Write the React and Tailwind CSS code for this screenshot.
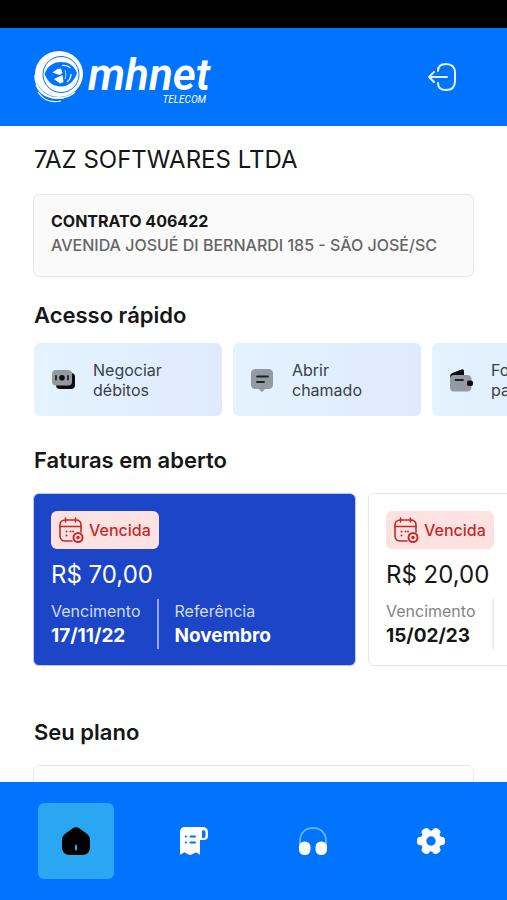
import React, { useState } from "react";

const quickLinks = [
  { id: "negociar", first: "Negociar", second: "débitos", Icon: MoneyIcon },
  { id: "chamado", first: "Abrir", second: "chamado", Icon: ChatIcon },
  { id: "pagamento", first: "Formas de", second: "pagamento", Icon: WalletIcon },
];

const invoices = [
  { id: 1, value: "R$ 70,00", dueDate: "17/11/22", reference: "Novembro", active: true },
  { id: 2, value: "R$ 20,00", dueDate: "15/02/23", reference: "Fevereiro", active: false },
];

const tabs = [
  { id: "home", label: "Início", Icon: HomeIcon },
  { id: "invoices", label: "Faturas", Icon: ReceiptIcon },
  { id: "support", label: "Suporte", Icon: HeadphonesIcon },
  { id: "settings", label: "Configurações", Icon: GearIcon },
];

function LogoMark() {
  return (
    <svg viewBox="0 0 50 54" className="h-[54px] w-[50px]" fill="none" aria-hidden="true">
      <path d="M1 25c0 12 8 22 22 23 8 0 14-2 18-6" stroke="#fff" strokeWidth="1.500" />
      <path d="M2 35c4 10 14 15 28 13" stroke="#fff" strokeWidth="1.200" />
      <path d="M4 42c5 8 13 11 23 9" stroke="#fff" strokeWidth="1.200" />
      <ellipse cx="25" cy="24" rx="24" ry="23" fill="#fff" />
      <circle cx="27" cy="24.500" r="18" stroke="#0073ff" strokeWidth="1" />
      <path d="M10.500 24C14 15 20 12 27 12s13 3 16 11c-3 9-9 13.500-16 13.500S14 33 10.500 24Z" fill="#0073ff" />
      <path d="m18.500 22.500 5-3.500 3.500-.500 1.500 4.500-3 2-7-2.500Z" fill="#fff" />
      <path d="m20 29 8.500-4 1 7-3.500 1.500L20 29Z" fill="#fff" />
      <path d="M28 15.500c4-.500 6.500.500 8.500 2.500M37 24c0 4-1.500 6-4 8" stroke="#fff" strokeWidth="1.200" />
      <path d="M31 20c1 3 1 6 0 9" stroke="#b9dbff" strokeWidth="1" />
    </svg>
  );
}

function LogoutIcon() {
  return (
    <svg
      viewBox="0 0 30 30"
      className="h-[30px] w-[30px]"
      fill="none"
      stroke="#e6f1ff"
      strokeWidth="2"
      strokeLinecap="round"
      strokeLinejoin="round"
      aria-hidden="true"
    >
      <path d="M11 9c0-4.500 2.500-7 8-7 6.500 0 9 3 9 9v8c0 6-2.500 9-9 9-5.500 0-8-2.500-8-7" />
      <path d="M20 15H2M7 10l-5 5 5 5" />
    </svg>
  );
}

function MoneyIcon() {
  return (
    <svg viewBox="0 0 26 22" className="h-[22px] w-[26px]" aria-hidden="true">
      <rect x="5" y="4" width="19" height="16" rx="4" fill="#0b0e11" />
      <rect x="1" y="1" width="20" height="15.500" rx="4" fill="#929ba1" />
      <circle cx="11" cy="8.800" r="2.800" fill="#0b0e11" />
      <path d="M5 6.800v4M17 6.800v4" stroke="#0b0e11" strokeWidth="1.500" strokeLinecap="round" />
    </svg>
  );
}

function ChatIcon() {
  return (
    <svg viewBox="0 0 24 24" className="h-6 w-6" aria-hidden="true">
      <path
        d="M6 1h12c3.500 0 5 1.800 5 5v10c0 3.200-1.500 5-5 5h-3l-2.300 2.500a1 1 0 0 1-1.400 0L9 21H6c-3.500 0-5-1.800-5-5V6c0-3.200 1.500-5 5-5Z"
        fill="#929ba1"
      />
      <path d="M7 8.500h11M7 14h7" stroke="#1d2327" strokeWidth="1.800" strokeLinecap="round" />
    </svg>
  );
}

function WalletIcon() {
  return (
    <svg viewBox="0 0 24 24" className="h-6 w-6" aria-hidden="true">
      <path d="M1 9c0-2 1-3.500 3-4.200l8.500-3.400C14 .800 15 1.700 15 3v5L1 10V9Z" fill="#0b0e11" />
      <path d="M5 7h13c3 0 4.500 1.500 4.500 4.500v7c0 3-1.500 5-4.500 5H5c-3 0-4-2-4-5V11c0-2.500 1.500-4 4-4Z" fill="#929ba1" />
      <path d="M6.500 12h7.500" stroke="#1d2327" strokeWidth="1.800" strokeLinecap="round" />
      <rect x="18" y="12.500" width="6" height="5.500" rx="2" fill="#0b0e11" />
    </svg>
  );
}

function CalendarIcon() {
  return (
    <svg
      viewBox="0 0 26 28"
      className="h-7 w-[26px]"
      fill="none"
      stroke="#c42a2a"
      strokeWidth="1.600"
      strokeLinecap="round"
      aria-hidden="true"
    >
      <path d="M6.500 2v4M16.500 2v4M1 10.500h21" />
      <path d="M13 25H6.500C3 25 1 23 1 20V9c0-3 2-5 5.500-5h10C20 4 22 6 22 9v7" />
      <path d="M7.500 15.500v.100M7.500 19.500v.100M11.500 15.500v.100M14 15.500v.100" strokeWidth="2" />
      <circle cx="19" cy="21.500" r="4.500" strokeWidth="2" />
      <circle cx="19" cy="21.500" r="1" fill="#c42a2a" />
    </svg>
  );
}

function HomeIcon() {
  return (
    <svg viewBox="0 0 28 28" className="h-7 w-7" aria-hidden="true">
      <path
        d="M10.500 1.500c2.300-1.600 4.700-1.600 7 0L24.500 6.500C27 8.400 28 10.300 28 13v7c0 5-3 8-8 8H8c-5 0-8-3-8-8v-7c0-2.700 1-4.600 3.500-6.500Z"
        fill="#000"
      />
      <path d="M14 18.500v4" stroke="#29a7f3" strokeWidth="2" strokeLinecap="round" />
    </svg>
  );
}

function ReceiptIcon() {
  return (
    <svg viewBox="0 0 28 28" className="h-7 w-7" aria-hidden="true">
      <path
        d="M5 0h17c4 0 6 2 6 5.500V9c0 2.500-1.500 4-4 4h-4v14.500c-1.500 0-2.500-2-4-2-2 0-3.500 2.500-6 2.500s-3.500-2.500-5.500-2.500c-1.500 0-3 2-4.500 2V6c0-4 1.500-6 5-6Z"
        fill="#fff"
      />
      <path d="M22 11V4.500C22 2.500 25.500 2.700 25.500 5.500V8.500c0 1.700-1 2.500-2 2.500Z" fill="#0073ff" />
      <path
        d="M10.500 9.500h4.500M10.500 15.500h4.500M5.800 9.500h.200M5.800 15.500h.200"
        stroke="#0073ff"
        strokeWidth="2"
        strokeLinecap="round"
      />
    </svg>
  );
}

function HeadphonesIcon() {
  return (
    <svg viewBox="0 0 28 28" className="h-7 w-7" aria-hidden="true">
      <path d="M1 20v-6C1 6 6.500 1 14 1s13 5 13 13v6" fill="none" stroke="#69acff" strokeWidth="1.800" />
      <rect x="0" y="14.500" width="11.500" height="13.500" rx="5.500" fill="#fff" />
      <rect x="16.500" y="14.500" width="11.500" height="13.500" rx="5.500" fill="#fff" />
    </svg>
  );
}

function GearIcon() {
  return (
    <svg viewBox="0 0 28 28" className="h-7 w-7" aria-hidden="true">
      <g fill="#fff">
        <circle cx="14" cy="14" r="10.500" />
        <rect x="0" y="9.800" width="28" height="8.400" rx="3.500" />
        <rect x="0" y="9.800" width="28" height="8.400" rx="3.500" transform="rotate(60 14 14)" />
        <rect x="0" y="9.800" width="28" height="8.400" rx="3.500" transform="rotate(120 14 14)" />
      </g>
      <circle cx="14" cy="14" r="4.700" fill="#0073ff" />
    </svg>
  );
}

const InvoiceCard = ({ invoice }) => {
  const { active } = invoice;

  return (
    <article
      className={`w-[323px] shrink-0 rounded-md border px-[17px] pt-[17px] pb-4 ${
        active ? "border-[#b8c9f5] bg-[#1d45c8] text-white" : "border-[#e8e8ea] bg-white text-[#161616]"
      }`}
    >
      <span className="inline-flex h-[38px] items-center gap-1 rounded-md bg-[#fee2e2] px-2 align-top text-base font-medium text-[#c42a2a]">
        <CalendarIcon />
        Vencida
      </span>
      <p className="mt-2 text-2xl leading-9">{invoice.value}</p>
      <dl className="mt-1.5 flex">
        <div className={`border-r-2 pr-4 ${active ? "border-[#8ea9ee]" : "border-[#ececee]"}`}>
          <dt className={`text-base leading-6 ${active ? "text-[#cfdcfb]" : "text-[#848484]"}`}>Vencimento</dt>
          <dd className="text-[19px] leading-[26px] font-bold">{invoice.dueDate}</dd>
        </div>
        <div className="pl-4">
          <dt className={`text-base leading-6 ${active ? "text-[#cfdcfb]" : "text-[#848484]"}`}>Referência</dt>
          <dd className="text-[19px] leading-[26px] font-bold">{invoice.reference}</dd>
        </div>
      </dl>
    </article>
  );
};

const App = () => {
  const [activeTab, setActiveTab] = useState("home");

  return (
    <div className="flex h-screen flex-col bg-white font-['Inter',sans-serif] text-[#161616]">
      <div className="h-7 shrink-0 bg-black" />

      <header className="flex h-[98px] shrink-0 items-center justify-between bg-[#0073ff] pr-[50px] pl-[34px]">
        <div className="flex items-center gap-1 text-white">
          <LogoMark />
          <div className="flex flex-col items-end pt-2 font-['Roboto',sans-serif] italic">
            <span className="text-[44px] leading-[38px] font-semibold">mhnet</span>
            <span className="pr-1 text-[10px] leading-3">TELECOM</span>
          </div>
        </div>
        <button type="button" aria-label="Sair">
          <LogoutIcon />
        </button>
      </header>

      <main className="min-h-0 flex-1 overflow-y-auto pt-4 [scrollbar-width:none]">
        <h1 className="px-[34px] text-2xl leading-9">7AZ SOFTWARES LTDA</h1>

        <section className="mx-[33px] mt-4 rounded-md border border-[#e8e8ea] bg-[#fafafa] px-[17px] pt-3.5 pb-[19px]">
          <h2 className="text-base leading-6 font-bold">CONTRATO 406422</h2>
          <p className="text-base leading-6 font-medium text-[#666666]">AVENIDA JOSUÉ DI BERNARDI 185 - SÃO JOSÉ/SC</p>
        </section>

        <section className="mt-[22px]">
          <h2 className="px-[34px] text-[22px] leading-8 font-semibold">Acesso rápido</h2>
          <div className="mt-3 flex gap-[11px] overflow-x-auto px-[34px] [scrollbar-width:none]">
            {quickLinks.map(({ id, first, second, Icon }) => (
              <button
                key={id}
                type="button"
                className="flex h-[73px] w-[188px] shrink-0 items-center rounded-md bg-linear-to-r from-[#e4f3ff] to-[#dfeafe] pl-[17px] text-left text-base leading-5 text-[#36424b]"
              >
                <span className="w-[42px]">
                  <Icon />
                </span>
                <span>
                  {first}
                  <br />
                  {second}
                </span>
              </button>
            ))}
          </div>
        </section>

        <section className="mt-7">
          <h2 className="px-[34px] text-[22px] leading-8 font-semibold">Faturas em aberto</h2>
          <div className="mt-[17px] flex gap-3 overflow-x-auto px-[33px] [scrollbar-width:none]">
            {invoices.map((invoice) => (
              <InvoiceCard key={invoice.id} invoice={invoice} />
            ))}
          </div>
        </section>

        <section className="mt-[50px]">
          <h2 className="px-[34px] text-[22px] leading-8 font-semibold">Seu plano</h2>
          <div className="mx-[33px] mt-[17px] h-40 rounded-md border border-[#e8e8ea]" />
        </section>
      </main>

      <nav className="grid h-[118px] shrink-0 grid-cols-4 items-center justify-items-center bg-[#0073ff] px-[17px]">
        {tabs.map(({ id, label, Icon }) => (
          <button
            key={id}
            type="button"
            aria-label={label}
            onClick={() => setActiveTab(id)}
            className={`flex h-[76px] w-[76px] items-center justify-center rounded-md ${
              activeTab === id ? "bg-[#29a7f3]" : ""
            }`}
          >
            <Icon />
          </button>
        ))}
      </nav>
    </div>
  );
};

export default App;
